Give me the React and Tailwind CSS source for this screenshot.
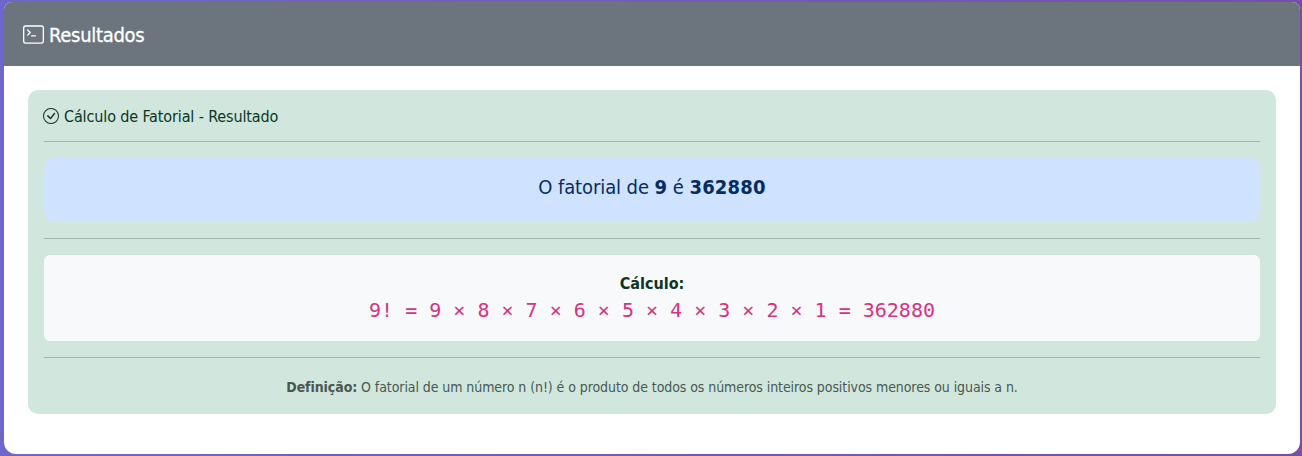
import { BsTerminal, BsCheckCircle } from "react-icons/bs";

const sans = "font-['DejaVu_Sans_Condensed','DejaVu_Sans',sans-serif] [font-stretch:condensed]";

function Divider() {
  return <hr className="my-4 h-px border-0 bg-[#0a3622]/25" />;
}

export default function App() {
  return (
    <div className={`h-[456px] bg-linear-to-r from-[#6f66cb] to-[#754fab] pt-0.5 pr-0.5 pb-0.5 pl-1 ${sans}`}>
      <div className="flex h-[452px] flex-col overflow-hidden rounded-t-lg rounded-b-xl bg-white">
        <header className="flex h-16 shrink-0 items-center bg-[#6c757d] pl-[19px] text-white">
          <BsTerminal className="mt-px mr-[5px] size-[21px]" />
          <h5 className="pt-0.5 text-[20px] leading-6 whitespace-nowrap">
            <span className="tracking-[-0.3px] [-webkit-text-stroke:0.3px_white]">Resultados</span>
          </h5>
        </header>
        <main className="p-6">
          <section className="h-[324px] rounded-[10px] bg-[#d1e7dd] p-4 text-[#0a3622]">
            <h6 className="flex h-[19px] items-center text-[16px] leading-[19px] whitespace-nowrap">
              <BsCheckCircle className="mr-[5px] -ml-px size-4" />
              <span className="pt-0.5 tracking-[-0.13px]">Cálculo de Fatorial - Resultado</span>
            </h6>
            <Divider />
            <div className="h-16 rounded-[10px] bg-[#cfe2ff] pt-[17px] text-center text-[20px] leading-6 text-[#052c65]">
              <span className="tracking-[-0.1px]">O fatorial de <b className="tracking-[0.2px]">9</b> é <b className="tracking-[0.2px]">362880</b></span>
            </div>
            <Divider />
            <div className="h-[86px] rounded-md bg-[#f8f9fa] pt-[17px] text-center">
              <strong className="block text-[16px] leading-6"><span className="tracking-[0px]">Cálculo:</span></strong>
              <code className="-mt-px block font-['DejaVu_Sans_Mono',monospace] text-[20px] leading-[30px] text-[#d63384]">
                9! = 9 × 8 × 7 × 6 × 5 × 4 × 3 × 2 × 1 = 362880
              </code>
            </div>
            <Divider />
            <p className="text-center text-[14px] leading-[26px] text-[#495751]">
              <span className="tracking-[-0.08px]"><b>Definição:</b> O fatorial de um número n (n!) é o produto de todos os números inteiros positivos menores ou iguais a n.</span>
            </p>
          </section>
        </main>
      </div>
    </div>
  );
}
